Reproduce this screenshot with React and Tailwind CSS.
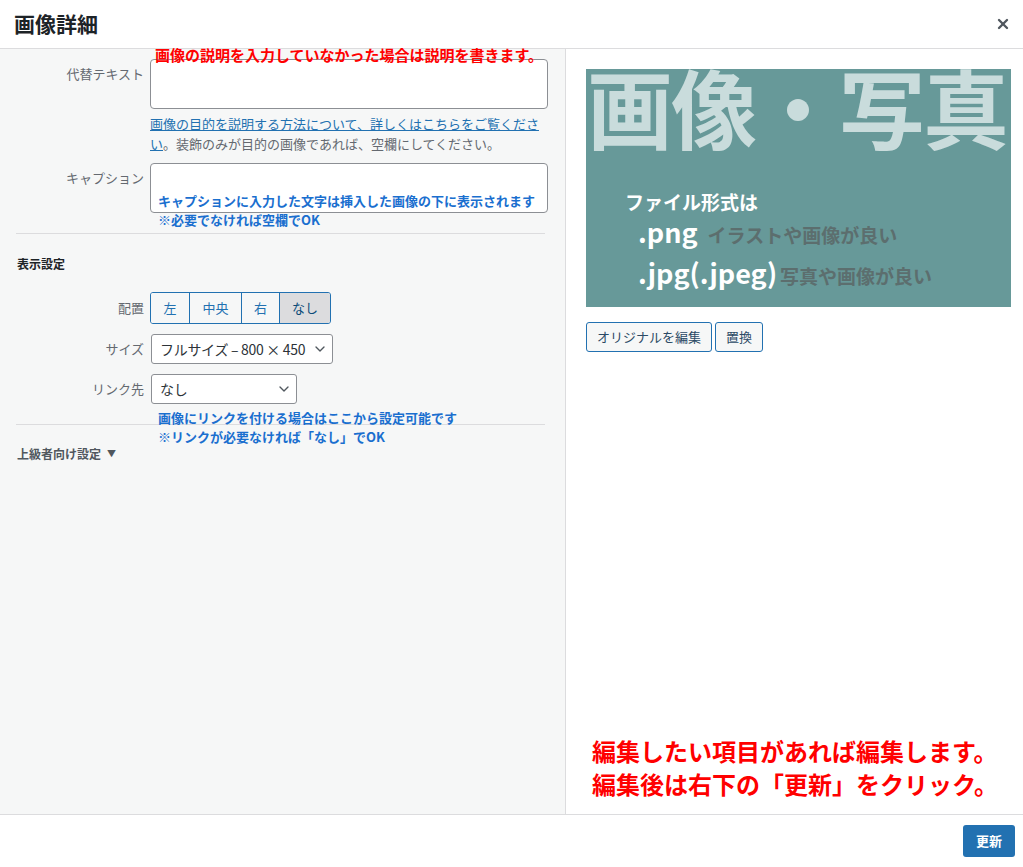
import { X, ChevronDown } from 'lucide-react';

const jp = 'font-["Noto_Sans_CJK_JP","Noto_Sans",sans-serif]';

function Label({ children }) {
    return <div className="w-[150px] shrink-0 pr-[6px] text-right text-[13px] leading-[18px] text-[#646970]">{children}</div>;
}

function Note({ color = 'blue', className = '', children }) {
    const tone = color === 'red' ? 'text-[#ff0000]' : 'text-[#1a6fcf]';
    return <div className={`pointer-events-none absolute whitespace-nowrap font-bold ${tone} ${className}`}>{children}</div>;
}

function Select({ value, width }) {
    return (
        <div className={`flex h-[30px] shrink-0 items-center justify-between whitespace-nowrap rounded-[3px] border border-[#8c8f94] bg-white pl-2 pr-[4px] text-[14px] tracking-[-0.3px] text-[#2c3338] ${width}`}>
            <span>{value}</span>
            <ChevronDown className="h-4 w-4 shrink-0 text-[#50575e]" strokeWidth={2} />
        </div>
    );
}

export default function App() {
    const aligns = ['左', '中央', '右', 'なし'];
    const alignWidths = ['w-[38px]', 'w-[52px]', 'w-[38px]', 'w-[51px]'];

    return (
        <div className={`flex h-[867px] w-[1023px] flex-col overflow-hidden bg-white ${jp}`}>
            <header className="flex h-[49px] shrink-0 items-center justify-between border-b border-[#dcdcde] pl-[14px] pr-[12px]">
                <h1 className="text-[21px] font-semibold text-[#1d2327]">画像詳細</h1>
                <X className="h-[16px] w-[16px] text-[#50575e]" strokeWidth={3.5} />
            </header>

            <div className="flex min-h-0 flex-1">
                <div className="w-[566px] shrink-0 border-r border-[#dcdcde] bg-[#f6f7f7] pr-[17px]">
                    {/* 代替テキスト */}
                    <div className="relative mt-[10px] flex">
                        <Note color="red" className="left-[155px] top-[-13px] text-[15px] leading-[18px]">
                            画像の説明を入力していなかった場合は説明を書きます。
                        </Note>
                        <div className="pt-[6px]"><Label>代替テキスト</Label></div>
                        <div className="w-[398px] shrink-0">
                            <div className="h-[50px] w-[398px] rounded-[4px] border border-[#8c8f94] bg-white" />
                            <p className="mt-[5px] text-[13px] leading-[20px] text-[#646970]">
                                <span className="text-[#2271b1] underline">画像の目的を説明する方法について、詳しくはこちらをご覧ください</span>
                                。装飾のみが目的の画像であれば、空欄にしてください。
                            </p>
                        </div>
                    </div>

                    {/* キャプション */}
                    <div className="relative mt-[9px] flex">
                        <div className="pt-[6px]"><Label>キャプション</Label></div>
                        <div className="h-[50px] w-[398px] shrink-0 rounded-[4px] border border-[#8c8f94] bg-white" />
                        <Note className="left-[158px] top-[28px] text-[13px] leading-[19px]">
                            キャプションに入力した文字は挿入した画像の下に表示されます
                            <br />
                            ※必要でなければ空欄でOK
                        </Note>
                    </div>

                    <hr className="ml-[16px] mr-[3px] mt-[20px] border-[#dcdcde]" />

                    <h2 className="ml-[17px] mt-[21px] text-[12px] font-bold leading-[18px] text-[#1d2327]">表示設定</h2>

                    <div className="mt-[19px] flex items-center">
                        <Label>配置</Label>
                        <div className="flex h-[32px] overflow-hidden rounded-[3px] border border-[#2271b1]">
                            {aligns.map((a, i) => (
                                <div
                                    key={a}
                                    className={`flex items-center justify-center text-[13px] ${alignWidths[i]} ${i > 0 ? 'border-l border-[#2271b1]' : ''} ${
                                        a === 'なし' ? 'border-[#0a4b78] bg-[#dcdcde] text-[#0a4b78]' : 'bg-[#f6f7f7] text-[#2271b1]'
                                    }`}
                                >
                                    {a}
                                </div>
                            ))}
                        </div>
                    </div>

                    <div className="mt-[10px] flex items-center">
                        <Label>サイズ</Label>
                        <Select value="フルサイズ – 800 × 450" width="ml-px w-[182px]" />
                    </div>

                    <div className="relative mt-[10px] flex items-center">
                        <Label>リンク先</Label>
                        <Select value="なし" width="ml-px w-[146px]" />
                        <Note className="left-[158px] top-[34px] text-[13px] leading-[19px]">
                            画像にリンクを付ける場合はここから設定可能です
                            <br />
                            ※リンクが必要なければ「なし」でOK
                        </Note>
                    </div>

                    <hr className="ml-[16px] mr-[3px] mt-[20px] border-[#dcdcde]" />

                    <div className="ml-[17px] mt-[20px] flex items-center gap-[6px] text-[12px] font-bold leading-[18px] text-[#50575e]">
                        上級者向け設定
                        <span className="text-[9px]">▼</span>
                    </div>
                </div>

                <div className="flex flex-1 flex-col px-[20px] pt-[20px]">
                    <div className="flex h-[238px] w-[425px] flex-col bg-[#679999]">
                        <div className="ml-[1px] mt-[-3px] whitespace-nowrap text-[86px] font-bold leading-[80px] tracking-[-2px] text-[#c9dcdc]">
                            画像・写真
                        </div>
                        <div className="ml-[39px] mt-[44px] text-[19px] font-bold leading-[24px] text-white">ファイル形式は</div>
                        <div className="ml-[52px] mt-[2px] flex items-baseline gap-[10px] whitespace-nowrap">
                            <span className="text-[27px] font-semibold leading-[32px] text-white">.png</span>
                            <span className="text-[19px] font-bold text-[#5c6e6e]">イラストや画像が良い</span>
                        </div>
                        <div className="ml-[52px] mt-[5px] flex items-baseline gap-[3px] whitespace-nowrap">
                            <span className="text-[27px] font-semibold leading-[36px] text-white">.jpg(.jpeg)</span>
                            <span className="text-[19px] font-bold text-[#5c6e6e]">写真や画像が良い</span>
                        </div>
                    </div>

                    <div className="mt-[15px] flex gap-[3px]">
                        <button className="h-[30px] w-[126px] rounded-[3px] border border-[#2271b1] bg-[#f6f7f7] text-[13px] text-[#2c4a66]">
                            オリジナルを編集
                        </button>
                        <button className="h-[30px] w-[48px] rounded-[3px] border border-[#2271b1] bg-[#f6f7f7] text-[13px] text-[#2c4a66]">
                            置換
                        </button>
                    </div>

                    <div className="mb-[14px] ml-[6px] mt-auto whitespace-nowrap text-[24px] font-bold leading-[33px] text-[#ff0000]">
                        編集したい項目があれば編集します。
                        <br />
                        編集後は右下の「更新」をクリック。
                    </div>
                </div>
            </div>

            <footer className="flex h-[53px] shrink-0 items-center justify-end border-t border-[#dcdcde] pr-[8px]">
                <button className="h-[32px] w-[52px] rounded-[3px] bg-[#2271b1] text-[13px] font-bold text-white">更新</button>
            </footer>
        </div>
    );
}
